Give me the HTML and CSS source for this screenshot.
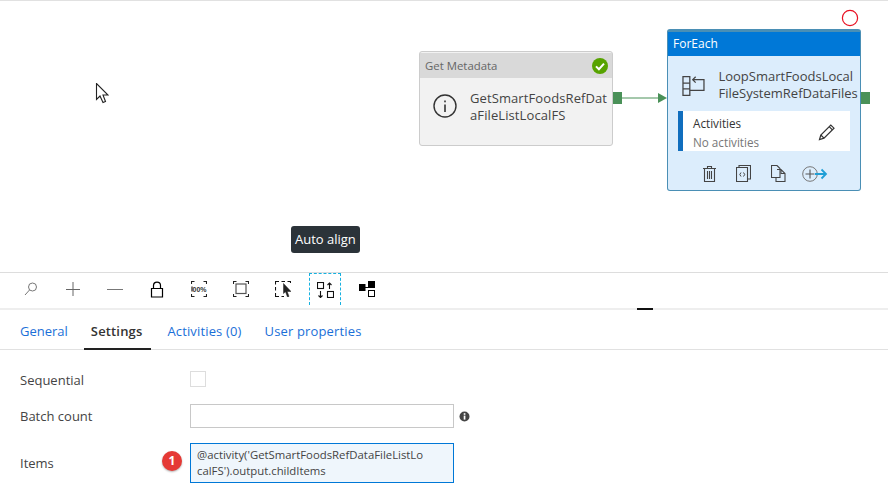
FILE: index.html
```html
<!DOCTYPE html>
<html lang="en">

<head>
  <meta charset="UTF-8">
  <title>ForEach settings</title>
  <link rel="stylesheet" href="styles.css">
</head>

<body>
  <div class="canvas">
    <!-- mouse pointer -->
    <svg class="pointer" width="14" height="21" viewBox="0 0 14 21">
      <path d="M1.5 0.5V16.5L5 13L8 19.5L10.5 18.5L8 12H13Z" fill="#fff" stroke="#222" stroke-width="1.1"/>
    </svg>

    <div class="node node-meta">
      <div class="node-head">
        <span>Get Metadata</span>
        <svg width="16" height="16" viewBox="0 0 16 16">
          <circle cx="8" cy="8" r="8" fill="#57a300"/>
          <path d="M4 8.4L6.9 11.2L12 5.6" fill="none" stroke="#fff" stroke-width="2"/>
        </svg>
      </div>
      <div class="node-main">
        <svg class="node-icon" width="24" height="24" viewBox="0 0 24 24">
          <circle cx="12" cy="12" r="11" fill="none" stroke="#333" stroke-width="1.4"/>
          <rect x="11.2" y="10.5" width="1.6" height="7.5" fill="#333"/>
          <rect x="11.2" y="6.5" width="1.6" height="1.8" fill="#333"/>
        </svg>
        <div class="node-name">GetSmartFoodsRefDataFileListLocalFS</div>
      </div>
    </div>

    <div class="port port-meta"></div>
    <svg class="link" width="46" height="12" viewBox="0 0 46 12">
      <path d="M0 6H38" stroke="#4a9158" stroke-width="1"/>
      <path d="M37 1L46 6L37 11Z" fill="#4a9158"/>
    </svg>

    <svg class="status-ring" width="18" height="18" viewBox="0 0 18 18">
      <circle cx="9" cy="9" r="7.6" fill="#fff" stroke="#e81123" stroke-width="1.2"/>
    </svg>

    <div class="node node-loop">
      <div class="node-head">ForEach</div>
      <div class="node-main">
        <svg class="node-icon" width="24" height="22" viewBox="0 0 24 22" fill="none" stroke="#444" stroke-width="1.3">
          <path d="M1 1.5H8V20.5H1ZM1 8H8M1 14H8"/>
          <path d="M8 15.5H22.5V4.5H11M14 1.5L11 4.5L14 7.5"/>
        </svg>
        <div class="node-name">LoopSmartFoodsLocal FileSystemRefDataFiles</div>
      </div>
      <div class="activities">
        <div>
          <div class="activities-title">Activities</div>
          <div class="activities-none">No activities</div>
        </div>
        <svg width="18" height="18" viewBox="0 0 18 18" fill="none" stroke="#333" stroke-width="1.2">
          <path d="M1.5 16.5L2.8 12L12.8 2L16 5.2L6 15.2Z"/>
          <path d="M11.2 3.6L14.4 6.8M2.8 12L6 15.2"/>
        </svg>
      </div>
      <div class="node-actions">
        <svg width="13" height="16" viewBox="0 0 13 16" fill="none" stroke="#444" stroke-width="1.1">
          <path d="M0 2.5H13M4.5 2.5V0.5H8.5V2.5M1.5 2.5V15.5H11.5V2.5M4.5 5V13M6.5 5V13M8.5 5V13"/>
        </svg>
        <svg width="15" height="17" viewBox="0 0 15 17" fill="none" stroke="#444" stroke-width="1.1">
          <path d="M0.5 2.5H11.5V16.5H0.5ZM3 2.5V0.5H14.5V14H11.5"/>
          <path d="M5 7.5L3.8 9.5L5 11.5M7.5 7.5L8.7 9.5L7.5 11.5" stroke-width="1"/>
        </svg>
        <svg width="15" height="17" viewBox="0 0 15 17" fill="none" stroke="#444" stroke-width="1.1">
          <path d="M0.5 0.5H6L9 3.5V12.5H0.5Z"/>
          <path d="M6 4.5H10L14 8.5V16.5H5V12.5M10 4.5V8.5H14"/>
        </svg>
        <svg width="26" height="16" viewBox="0 0 26 16" fill="none">
          <circle cx="8" cy="8" r="7.3" stroke="#777" stroke-width="1"/>
          <path d="M3.5 8H12.5M8 3.5V12.5" stroke="#555" stroke-width="1.1"/>
          <path d="M13 8H24M19.5 3.5L24 8L19.5 12.5" stroke="#1f9fd6" stroke-width="1.8"/>
        </svg>
      </div>
    </div>
    <div class="port port-loop"></div>

    <div class="tooltip">Auto align</div>
  </div>

  <div class="toolbar">
    <button class="tool">
      <svg width="16" height="16" viewBox="0 0 16 16" fill="none" stroke="#777" stroke-width="1">
        <circle cx="9.5" cy="6" r="4"/>
        <path d="M6.5 9L2 14"/>
      </svg>
    </button>
    <button class="tool">
      <svg width="14" height="14" viewBox="0 0 14 14" stroke="#666" stroke-width="1"><path d="M0 7.5H14M7 0V14"/></svg>
    </button>
    <button class="tool">
      <svg width="16" height="16" viewBox="0 0 16 16" stroke="#777" stroke-width="1"><path d="M0 8.5H16"/></svg>
    </button>
    <button class="tool">
      <svg width="14" height="17" viewBox="0 0 14 17" fill="none" stroke="#000" stroke-width="1.2">
        <path d="M1.5 7.5H12.5V16H1.5ZM3.5 7.5V4.5C3.5 0 10.5 0 10.5 4.5V7.5"/>
      </svg>
    </button>
    <button class="tool">
      <svg width="16" height="16" viewBox="0 0 16 16" fill="none" stroke="#222" stroke-width="1.1">
        <path d="M0.5 3V0.5H3.5M12.5 0.5H15.5V3M15.5 13V15.5H12.5M3.5 15.5H0.5V13"/>
        <text x="8.5" y="10.6" class="zoom-label">00%</text>
        <path d="M1 5.5V10.5" stroke-width="1.2"/>
      </svg>
    </button>
    <button class="tool">
      <svg width="16" height="16" viewBox="0 0 16 16" fill="none" stroke="#222" stroke-width="1.1">
        <path d="M0.5 3V0.5H3.5M12.5 0.5H15.5V3M15.5 13V15.5H12.5M3.5 15.5H0.5V13"/>
        <rect x="3" y="3" width="10" height="9.5" stroke="#555" stroke-width="1.2"/>
      </svg>
    </button>
    <button class="tool">
      <svg width="16" height="16" viewBox="0 0 16 16" fill="none" stroke="#111" stroke-width="1.1">
        <path d="M0.5 3.5V0.5H4M6.5 0.5H10M12.5 0.5H15.5V2M0.5 6V9.5M0.5 12V15.5H4M6.5 15.5H9"/>
        <path d="M8.5 2.5V12.5L10.5 10.8L12.5 16L14 15.4L12.2 10.5H16Z" fill="#222" stroke="#222" stroke-width="0.5"/>
      </svg>
    </button>
    <button class="tool tool-focus">
      <svg width="17" height="16" viewBox="0 0 17 16" fill="none" stroke="#111" stroke-width="1.1">
        <rect x="0.5" y="0.5" width="6" height="6"/>
        <rect x="10.5" y="9.5" width="6" height="6"/>
        <path d="M12.5 7V1M10.5 3L12.5 1L14.5 3M3.5 9V15.5M1.5 13.5L3.5 15.5L5.5 13.5"/>
      </svg>
    </button>
    <button class="tool">
      <svg width="16" height="16" viewBox="0 0 16 16" stroke="#000" stroke-width="1">
        <rect x="0" y="3" width="6.5" height="7" fill="#000" stroke="none"/>
        <rect x="9" y="0" width="7" height="7" fill="#000" stroke="none"/>
        <rect x="9.5" y="9.5" width="6" height="6" fill="#fff"/>
        <path d="M6 6.5H9" fill="none"/>
      </svg>
    </button>
  </div>

  <div class="splitter"><span class="grip"></span></div>

  <div class="tabs">
    <a href="#" class="tab">General</a>
    <a href="#" class="tab active">Settings</a>
    <a href="#" class="tab">Activities (0)</a>
    <a href="#" class="tab">User properties</a>
  </div>

  <div class="form">
    <label>Sequential</label>
    <div><input type="checkbox" class="check"></div>

    <label>Batch count</label>
    <div class="field-line">
      <input type="text" class="text-input">
      <svg width="11" height="11" viewBox="0 0 11 11">
        <circle cx="5.5" cy="5.5" r="5" fill="#444"/>
        <rect x="4.7" y="4.6" width="1.7" height="4" fill="#fff"/>
        <rect x="4.7" y="2.2" width="1.7" height="1.6" fill="#fff"/>
      </svg>
    </div>

    <label>Items</label>
    <div class="items-wrap">
      <span class="badge">1</span>
      <div class="items-box">@activity('GetSmartFoodsRefDataFileListLocalFS').output.childItems</div>
    </div>
  </div>
</body>

</html>
```

FILE: styles.css
```css
body {
  margin: 0;
  width: 888px;
  height: 500px;
  overflow: hidden;
  background-color: #ffffff;
  color: #333333;
  font-family: 'Open Sans', 'Noto Sans', sans-serif;
  font-size: 13px;
}

/* pipeline canvas */
.canvas {
  position: relative;
  height: 271px;
  border-top: 1px solid #e1e1e1;
  border-bottom: 1px solid #dddddd;
}

.pointer {
  position: absolute;
  left: 95px;
  top: 82px;
}

.node {
  position: absolute;
  box-sizing: border-box;
  border-radius: 3px;
}

.node-head {
  display: flex;
  align-items: center;
  justify-content: space-between;
  height: 25px;
  padding: 0 4px 0 5px;
  font-size: 11.4px;
}

.node-main {
  display: flex;
  align-items: flex-start;
}

.node-name {
  font-size: 13px;
  line-height: 17px;
  word-break: break-all;
  color: #444444;
}

.node-meta {
  left: 419px;
  top: 50px;
  width: 194px;
  height: 95px;
  background-color: #f2f2f2;
  border: 1px solid #cccccc;
}

.node-meta .node-head {
  margin-top: 1px;
  background-color: #d9d9d9;
  color: #666666;
}

.node-meta .node-main {
  padding: 12px 0 0 13px;
  gap: 13px;
}

.node-meta .node-icon {
  margin-top: 4px;
}

.node-meta .node-name {
  width: 140px;
  letter-spacing: 0.1px;
}

.node-loop {
  left: 667px;
  top: 28px;
  width: 194px;
  height: 162px;
  background-color: #dcedfc;
  border: 1px solid #4a8fb5;
  border-top-width: 3px;
}

.node-loop .node-head {
  box-sizing: border-box;
  padding-bottom: 2px;
  background-color: #0078d7;
  color: #ffffff;
  font-size: 12px;
  height: 24px;
}

.node-loop .node-main {
  padding: 12px 0 0 14px;
  gap: 13px;
  height: 43px;
}

.node-loop .node-icon {
  margin-top: 7px;
}

.node-loop .node-name {
  width: 145px;
  word-break: normal;
  white-space: normal;
}

.activities {
  display: flex;
  align-items: center;
  justify-content: space-between;
  box-sizing: border-box;
  height: 40px;
  margin: 0 10px;
  padding: 4px 14px 0 10px;
  background-color: #ffffff;
  border-left: 5px solid #106ebe;
  font-size: 11.7px;
  line-height: 19px;
}

.activities svg {
  margin-top: -2px;
}

.activities-none {
  color: #777777;
}

.node-actions {
  display: flex;
  align-items: center;
  gap: 20px;
  padding: 14px 0 0 35px;
}

.node-actions svg:last-child {
  margin-left: -4px;
}

.port {
  position: absolute;
  width: 9px;
  height: 12px;
  background-color: #4a9158;
}

.port-meta {
  left: 613px;
  top: 91px;
}

.port-loop {
  left: 861px;
  top: 91px;
}

.link {
  position: absolute;
  left: 621px;
  top: 91px;
}

.status-ring {
  position: absolute;
  left: 841px;
  top: 8px;
}

.tooltip {
  position: absolute;
  left: 291px;
  top: 225px;
  padding: 0 4px;
  line-height: 27px;
  font-size: 13px;
  color: #ffffff;
  background-color: #2b3339;
  border-radius: 3px;
}

/* toolbar */
.toolbar {
  display: flex;
  gap: 10px;
  height: 35px;
  padding-left: 15px;
}

.tool {
  display: flex;
  align-items: center;
  justify-content: center;
  box-sizing: border-box;
  width: 32px;
  height: 32px;
  padding: 0;
  background: none;
  border: none;
}

.tool-focus {
  border: 1px dashed #16b1e0;
  border-bottom-style: none;
}

.zoom-label {
  font-family: 'Liberation Sans', sans-serif;
  font-size: 7px;
  font-weight: 700;
  text-anchor: middle;
  fill: #333333;
  stroke: none;
}

.splitter {
  position: relative;
  height: 2px;
  background-color: #eeeeee;
}

.grip {
  position: absolute;
  left: 637px;
  top: 0;
  width: 16px;
  height: 2px;
  background-color: #111111;
}

/* tabs */
.tabs {
  display: flex;
  gap: 9px;
  height: 39px;
  padding-left: 13px;
  border-bottom: 1px solid #e1e1e1;
}

.tab {
  box-sizing: border-box;
  height: 40px;
  padding: 0 7px;
  line-height: 43px;
  letter-spacing: 0.15px;
  color: #1a6fd8;
  text-decoration: none;
}

.tab:first-child {
  letter-spacing: 0;
}

.tab.active {
  padding-right: 9px;
  color: #333333;
  font-weight: 600;
  border-bottom: 2px solid #222222;
}

/* settings form */
.form {
  display: grid;
  grid-template-columns: 170px 264px;
  grid-template-rows: 18px 24px 40px;
  row-gap: 15px;
  padding: 21px 0 0 20px;
  color: #444444;
}

.form label {
  align-self: center;
}

.check {
  display: block;
  box-sizing: border-box;
  width: 16px;
  height: 16px;
  margin: 0;
  appearance: none;
  border: 1px solid #dddddd;
}

.field-line {
  position: relative;
}

.text-input {
  display: block;
  box-sizing: border-box;
  width: 264px;
  height: 24px;
  border: 1px solid #c8c8c8;
}

.field-line svg {
  position: absolute;
  left: 269px;
  top: 7px;
}

.items-wrap {
  position: relative;
}

.items-box {
  box-sizing: border-box;
  height: 40px;
  padding: 3px 28px 3px 6px;
  background-color: #eff6fc;
  border: 1px solid #0078d7;
  font-size: 11.35px;
  line-height: 16px;
  word-break: break-all;
}

.badge {
  position: absolute;
  left: -28px;
  top: 8px;
  width: 20px;
  height: 20px;
  border-radius: 50%;
  background-color: #e53935;
  color: #ffffff;
  font-size: 12px;
  font-weight: 700;
  line-height: 20px;
  text-align: center;
  box-shadow: 0 1px 2px rgba(0, 0, 0, 0.3);
}
```
